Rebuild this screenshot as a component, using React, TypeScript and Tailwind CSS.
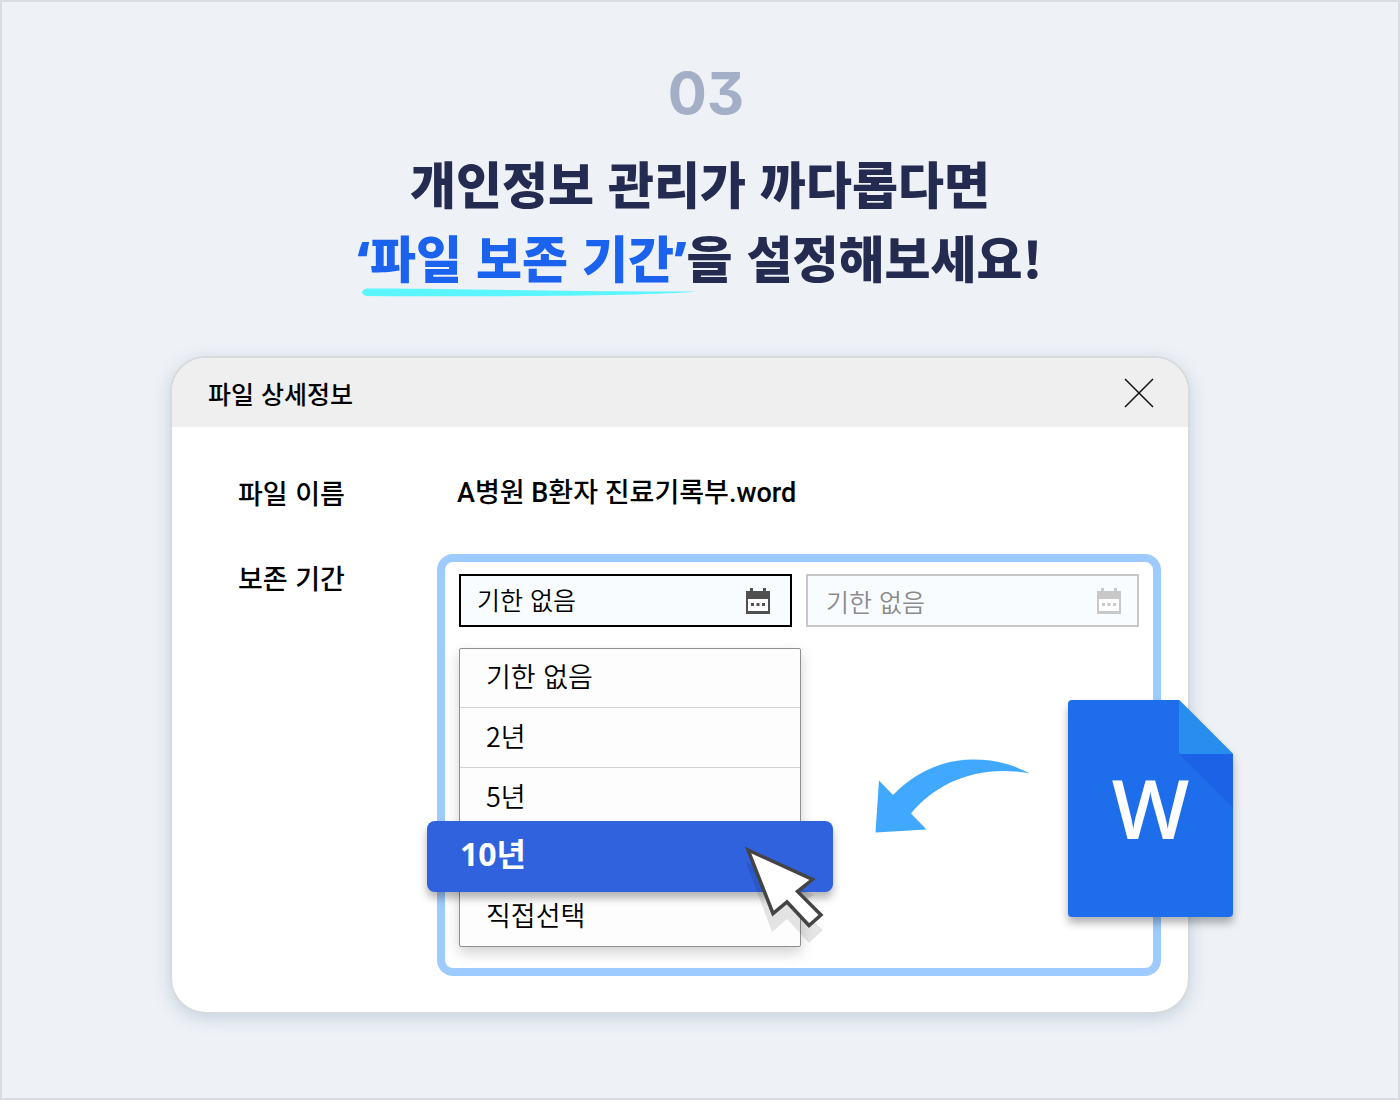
import { useState } from 'react';
import clsx from 'clsx';

const PERIODS = ['기한 없음', '2년', '5년', '10년', '직접선택'];

const CalendarIcon = () => (
  <svg viewBox="0 0 24 26" className="h-[26px] w-6" fill="currentColor" aria-hidden="true">
    <path d="M4 0h3v3H4zM17 0h3v3h-3z" />
    <path fillRule="evenodd" d="M0 3h24v23H0zM2 11v12h20V11z" />
    <path fill="#fff" d="M2 11h20v12H2z" />
    <path d="M5 15h3v3H5zM10.500 15h3v3h-3zM16 15h3v3h-3z" />
  </svg>
);

const CursorIcon = () => (
  <svg
    viewBox="0 0 80 98"
    className="pointer-events-none absolute right-[9px] top-[25px] h-[98px] w-20"
    aria-hidden="true"
  >
    <path d="M2 16L70 49L53 60L79 84L65 97L43 73L28 86z" fill="#000" fillOpacity=".1" />
    <path
      d="M4 4L68.500 33.500L53.500 45.500L77 69L65 79.500L43 56L29 67.500z"
      fill="#fff"
      stroke="#444"
      strokeWidth="3.500"
    />
  </svg>
);

const CurvedArrow = () => (
  <svg
    viewBox="0 0 156 76"
    className="absolute right-[157px] top-[400px] h-[76px] w-[156px]"
    fill="#40a8ff"
    aria-hidden="true"
  >
    <path d="M0.500 74.500L4 22.500L18 37C37 17 65 1.500 98 1.500C119 1.500 137 6 155 15.500C104 6 62 24 36 55.500L51.500 71.500z" />
  </svg>
);

const WordFile = () => (
  <div className="absolute -right-[45px] top-[342px] flex h-[217px] w-[165px] items-center justify-center">
    <svg
      viewBox="0 0 165 217"
      className="absolute inset-0 h-full w-full drop-shadow-[0_6px_4px_rgba(0,0,0,0.3)]"
      aria-hidden="true"
    >
      <path d="M4 0H111L165 54V213a4 4 0 0 1-4 4H4a4 4 0 0 1-4-4V4a4 4 0 0 1 4-4z" fill="#1e6eeb" />
      <path d="M111 54H165V108z" fill="#1b62e6" />
      <path d="M111 0L165 54H113a2 2 0 0 1-2-2z" fill="#278ef0" />
    </svg>
    <span className="relative pb-1 font-['Open_Sans',sans-serif] text-[82px] font-semibold leading-none text-white">
      W
    </span>
  </div>
);

interface DateFieldProps {
  label: string;
  value: string;
  disabled?: boolean;
}

const DateField = ({ label, value, disabled }: DateFieldProps) => (
  <div
    className={clsx(
      'flex h-[53px] min-w-0 items-center border-2 bg-[#f9fcff]',
      disabled ? 'border-[#c8c8c8] pl-[18px] pr-4 text-[#c8c8c8]' : 'border-black pl-4 pr-5 text-[#505050]'
    )}
  >
    <input
      type="text"
      aria-label={label}
      value={value}
      readOnly
      disabled={disabled}
      className={clsx(
        'h-10 w-full min-w-0 bg-transparent text-[25px] font-[350] leading-9 outline-none',
        disabled ? 'text-[#8c8c8c]' : 'pb-1 text-black'
      )}
    />
    <button type="button" aria-label={`${label} 달력`} disabled={disabled} className="shrink-0">
      <CalendarIcon />
    </button>
  </div>
);

export default function App() {
  const [period, setPeriod] = useState('10년');

  return (
    <main
      lang="ko"
      className="min-h-screen border-2 border-[#d9dde1] bg-[#eef1f6] pb-[84px] font-['Noto_Sans_CJK_KR',sans-serif]"
    >
      <header className="pt-[55px] text-center">
        <p className="pl-3 font-['Inter',sans-serif] text-[58px] font-bold leading-[72px] text-[#a2afc7] [font-feature-settings:'cv09']">
          03
        </p>
        <h1 className="mt-4 text-[50px] font-black leading-[74px] text-[#242b51]">
          개인정보 관리가 까다롭다면
          <br />
          <span className="relative text-[#1b63ef]">
            <span className="font-['Open_Sans',sans-serif]">‘</span>
            파일 보존 기간
            <span className="font-['Open_Sans',sans-serif]">’</span>
            <svg
              viewBox="0 0 334 9"
              preserveAspectRatio="none"
              className="absolute -bottom-[5px] left-1 h-[9px] w-[102%]"
              aria-hidden="true"
            >
              <path
                d="M5 0.500C80 0 180 4 334 3.500C290 8 120 9 5 8C-1.500 7 -1.500 1.500 5 0.500z"
                fill="#5af5ff"
              />
            </svg>
          </span>
          을 설정해보세요!
        </h1>
      </header>

      <section className="relative ml-[168px] mr-[208px] mt-[60px] rounded-[36px] border-2 border-[#d9dadb] bg-white shadow-[0_4px_16px_rgba(120,150,180,0.35)]">
        <div className="flex h-[69px] items-center justify-between rounded-t-[34px] bg-[#efefef] pl-9 pr-[34px]">
          <h2 className="text-[25px] font-medium leading-10 text-black">파일 상세정보</h2>
          <button type="button" aria-label="닫기">
            <svg viewBox="0 0 30 30" className="size-[30px]" stroke="#111" strokeWidth="1.500" aria-hidden="true">
              <path d="M1 1L29 29M29 1L1 29" />
            </svg>
          </button>
        </div>

        <dl className="grid grid-cols-[199px_minmax(0,1fr)] gap-y-[41px] pb-9 pl-[66px] pr-[27px] pt-[46px] text-[27px] leading-10 text-black">
          <dt className="font-medium">파일 이름</dt>
          <dd className="pl-5 font-['Roboto','Noto_Sans_CJK_KR',sans-serif] font-medium">
            A병원 B환자 진료기록부.word
          </dd>

          <dt className="pt-1 font-medium">보존 기간</dt>
          <dd className="rounded-2xl border-8 border-[#9dcbff] px-3.5 pb-[21px] pt-3">
            <div className="grid grid-cols-2 gap-3.5">
              <DateField label="시작일" value="기한 없음" />
              <DateField label="종료일" value="기한 없음" disabled />
            </div>

            <div
              role="listbox"
              aria-label="보존 기간"
              className="mt-[21px] w-[342px] rounded-xs border border-[#8f8f8f] bg-[#fdfdfd] font-[350] shadow-[0_6px_14px_rgba(0,0,0,0.18)]"
            >
              {PERIODS.map((item, index) => {
                const selected = item === period;
                return (
                  <button
                    key={item}
                    type="button"
                    role="option"
                    aria-selected={selected}
                    onClick={() => setPeriod(item)}
                    className={clsx(
                      'block text-left',
                      selected
                        ? "relative -mx-[33px] -my-1.5 h-[71px] w-[406px] rounded-lg bg-[#3062de] pb-1.5 pl-[33px] font-['Open_Sans','Noto_Sans_CJK_KR',sans-serif] text-[32px] font-bold text-white shadow-[0_6px_8px_rgba(0,0,0,0.3)]"
                        : 'w-full pb-1 pl-[26px]',
                      !selected && (index > 0 ? 'h-[60px] border-t border-[#d2d2d2]' : 'h-[58px]')
                    )}
                  >
                    {item}
                    {selected && <CursorIcon />}
                  </button>
                );
              })}
            </div>
          </dd>
        </dl>

        <CurvedArrow />
        <WordFile />
      </section>
    </main>
  );
}
